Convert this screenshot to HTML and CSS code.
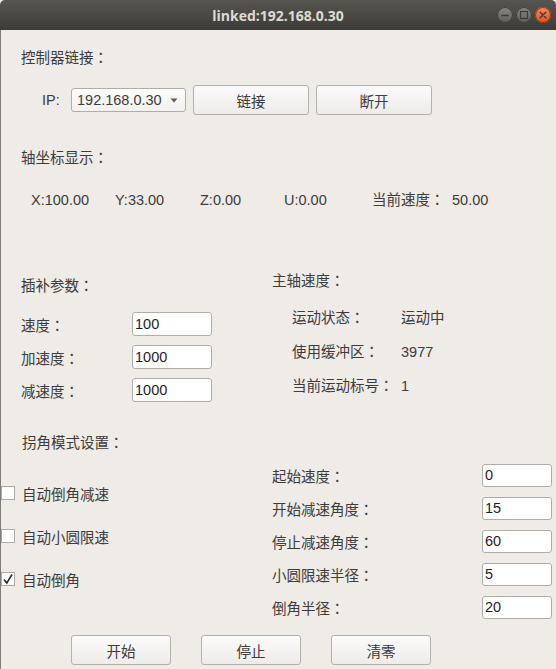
FILE: index.html
```html
<!DOCTYPE html>
<html lang="zh">
<head>
<meta charset="utf-8">
<title>linked:192.168.0.30</title>
<link rel="stylesheet" href="styles.css">
</head>
<body>
<div class="window">
  <header class="titlebar">
    <span class="spacer"></span>
    <h1 class="title">linked:192.168.0.30</h1>
    <div class="controls">
      <span class="wbtn wbtn-grey"><svg width="16" height="16" viewBox="0 0 16 16"><line x1="4.5" y1="8.5" x2="11.5" y2="8.5" stroke="#3c3b37" stroke-width="1.4"/></svg></span>
      <span class="wbtn wbtn-grey"><svg width="16" height="16" viewBox="0 0 16 16"><rect x="4.5" y="4.5" width="7" height="7" fill="none" stroke="#3c3b37" stroke-width="1.2"/></svg></span>
      <span class="wbtn wbtn-close"><svg width="16" height="16" viewBox="0 0 16 16"><path d="M5.2 5.2 L10.8 10.8 M10.8 5.2 L5.2 10.8" stroke="#3c3b37" stroke-width="1.4" stroke-linecap="round"/></svg></span>
    </div>
  </header>
  <main class="body">
    <div class="heading h-link">控制器链接：</div>
    <div class="ip-row">
      <span class="ip-label">IP:</span>
      <div class="combo"><span class="combo-text">192.168.0.30</span><svg class="combo-arrow" width="8" height="5" viewBox="0 0 8 5"><path d="M0.5 0.5 L7.5 0.5 L4 4.5 Z" fill="#5a5a5a"/></svg></div>
      <button class="btn btn-wide">链接</button>
      <button class="btn btn-wide">断开</button>
    </div>
    <div class="heading h-axis">轴坐标显示：</div>
    <div class="coords">
      <span>X:100.00</span><span>Y:33.00</span><span>Z:0.00</span><span>U:0.00</span><span>当前速度：</span><span>50.00</span>
    </div>
    <div class="mid">
      <section class="interp">
        <div class="heading">插补参数：</div>
        <div class="fields">
          <div class="field"><span class="lbl">速度：</span><div class="txt">100</div></div>
          <div class="field"><span class="lbl">加速度：</span><div class="txt">1000</div></div>
          <div class="field"><span class="lbl">减速度：</span><div class="txt">1000</div></div>
        </div>
      </section>
      <section class="spindle">
        <div class="heading">主轴速度：</div>
        <div class="status">
          <div class="srow"><span class="slbl">运动状态：</span><span>运动中</span></div>
          <div class="srow"><span class="slbl">使用缓冲区：</span><span>3977</span></div>
          <div class="srow"><span class="slbl">当前运动标号：</span><span>1</span></div>
        </div>
      </section>
    </div>
    <div class="lower">
      <section class="corner">
        <div class="heading h-corner">拐角模式设置：</div>
        <div class="checks">
          <div class="chk"><span class="box"></span><span>自动倒角减速</span></div>
          <div class="chk"><span class="box"></span><span>自动小圆限速</span></div>
          <div class="chk"><span class="box box-on"><svg width="12" height="12" viewBox="0 0 12 12"><path d="M2 6.5 L4.8 10 L10 1.5" fill="none" stroke="#2e2e2e" stroke-width="1.6"/></svg></span><span>自动倒角</span></div>
        </div>
      </section>
      <section class="params">
        <div class="pfield"><span class="plbl">起始速度：</span><div class="txt txt-s">0</div></div>
        <div class="pfield"><span class="plbl">开始减速角度：</span><div class="txt txt-s">15</div></div>
        <div class="pfield"><span class="plbl">停止减速角度：</span><div class="txt txt-s">60</div></div>
        <div class="pfield"><span class="plbl">小圆限速半径：</span><div class="txt txt-s">5</div></div>
        <div class="pfield"><span class="plbl">倒角半径：</span><div class="txt txt-s">20</div></div>
      </section>
    </div>
    <div class="actions">
      <button class="btn btn-act">开始</button>
      <button class="btn btn-act">停止</button>
      <button class="btn btn-act">清零</button>
    </div>
  </main>
</div>
</body>
</html>
```
FILE: styles.css
```css
* { box-sizing: border-box; }
html, body { margin: 0; padding: 0; }
body {
  width: 556px;
  height: 669px;
  overflow: hidden;
  background: #efebe7;
  font-family: "Liberation Sans", "Noto Sans CJK JP", sans-serif;
  font-feature-settings: "locl" 0;
  font-size: 14.5px;
  color: #3c3c3c;
}
.window {
  width: 556px;
  height: 669px;
  display: flex;
  flex-direction: column;
}
.titlebar {
  flex: none;
  height: 30px;
  display: grid;
  grid-template-columns: 1fr auto 1fr;
  align-items: center;
  background: linear-gradient(#57554f, #3c3b37);
  border-radius: 5px 5px 0 0;
}
.title {
  margin: 0;
  font: bold 14px "Open Sans", "DejaVu Sans", sans-serif;
  color: #dfdbd2;
  white-space: nowrap;
}
.controls {
  justify-self: end;
  display: flex;
  gap: 3px;
  padding-right: 5px;
}
.wbtn {
  width: 16px;
  height: 16px;
  border-radius: 50%;
  display: flex;
}
.wbtn-grey {
  background: linear-gradient(#8a8883, #5f5d58);
  box-shadow: inset 0 0 0 1px #3f3e3a;
}
.wbtn-close {
  background: linear-gradient(#f58a5c, #e0501d);
  box-shadow: inset 0 0 0 1px #9b3a14;
}
.body {
  flex: 1;
  display: flex;
  flex-direction: column;
  border-left: 1px solid #7f7c78;
}
.heading {
  height: 20px;
  line-height: 20px;
  white-space: nowrap;
}
.h-link { margin: 18px 0 0 20px; }
.ip-row {
  margin-top: 17px;
  height: 30px;
  display: flex;
  align-items: center;
}
.ip-label {
  margin-left: 41px;
  width: 29px;
}
.combo {
  width: 115px;
  height: 24px;
  margin-right: 7px;
  padding: 0 7px 0 5px;
  display: flex;
  align-items: center;
  justify-content: space-between;
  border: 1px solid #b0aca7;
  border-radius: 3px;
  background: linear-gradient(#fdfcfc, #f3f1ef);
}
.combo-text { line-height: 20px; }
.btn {
  font: inherit;
  font-feature-settings: "locl" 0;
  color: #3c3c3c;
  padding: 0;
  border: 1px solid #b4b0ab;
  border-radius: 3px;
  background: linear-gradient(#fcfbfb, #eeebe8);
  height: 30px;
}
.btn-wide {
  width: 116px;
  margin-right: 7px;
}
.h-axis { margin: 33px 0 0 20px; }
.coords {
  margin-top: 22px;
  height: 20px;
  line-height: 20px;
  padding-left: 30px;
  display: grid;
  grid-template-columns: 84px 85px 84px 88px 80px auto;
  white-space: nowrap;
}
.mid {
  margin-top: 61px;
  display: flex;
}
.interp {
  margin-left: 20px;
  width: 251px;
  padding-top: 5px;
}
.fields {
  margin-top: 16px;
  display: flex;
  flex-direction: column;
  gap: 9px;
}
.field, .pfield {
  height: 24px;
  display: flex;
  align-items: center;
  white-space: nowrap;
}
.lbl { width: 111px; }
.txt {
  width: 80px;
  height: 24px;
  line-height: 22px;
  padding-left: 2px;
  background: #ffffff;
  border: 1px solid #b0aca7;
  border-radius: 3px;
  color: #1e1e1e;
}
.txt-s {
  width: 70px;
  height: 23px;
  line-height: 21px;
}
.status {
  margin-top: 17px;
  padding-left: 20px;
  display: flex;
  flex-direction: column;
  gap: 14px;
}
.srow {
  height: 20px;
  line-height: 20px;
  display: flex;
  white-space: nowrap;
}
.slbl { width: 109px; }
.lower {
  margin-top: 31px;
  display: flex;
}
.corner { width: 271px; }
.h-corner { margin-left: 21px; }
.checks {
  margin-top: 30px;
  display: flex;
  flex-direction: column;
  gap: 23px;
}
.chk {
  height: 20px;
  display: flex;
  align-items: center;
  gap: 7px;
  white-space: nowrap;
}
.box {
  width: 14px;
  height: 14px;
  background: #ffffff;
  border: 1px solid #aeaaa5;
  display: flex;
  align-items: center;
  justify-content: center;
}
.params {
  padding-top: 30px;
  display: flex;
  flex-direction: column;
  gap: 9px;
}
.plbl { width: 210px; }
.actions {
  margin-top: 16px;
  padding-left: 70px;
  display: flex;
  gap: 30px;
}
.btn-act { width: 100px; }
```
